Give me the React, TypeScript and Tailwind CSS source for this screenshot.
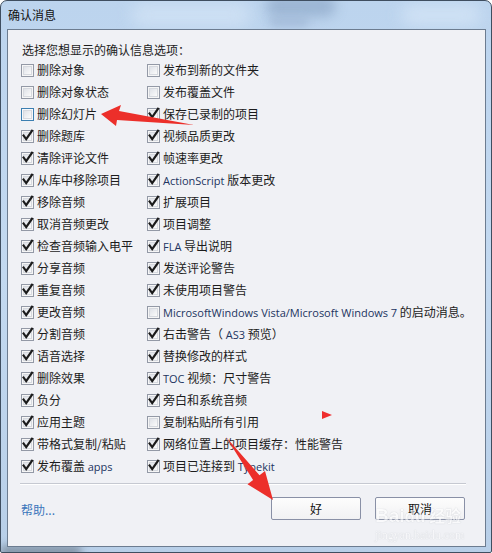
import React from "react";

const L = ({ children }: { children: React.ReactNode }) => (
  <span className="font-['Open_Sans',sans-serif] text-[11px] text-[#22345f]">{children}</span>
);

type Item = { label: React.ReactNode; checked: boolean; focus?: boolean };

const leftItems: Item[] = [
  { label: "删除对象", checked: false },
  { label: "删除对象状态", checked: false },
  { label: "删除幻灯片", checked: false, focus: true },
  { label: "删除题库", checked: true },
  { label: "清除评论文件", checked: true },
  { label: "从库中移除项目", checked: true },
  { label: "移除音频", checked: true },
  { label: "取消音频更改", checked: true },
  { label: "检查音频输入电平", checked: true },
  { label: "分享音频", checked: true },
  { label: "重复音频", checked: true },
  { label: "更改音频", checked: true },
  { label: "分割音频", checked: true },
  { label: "语音选择", checked: true },
  { label: "删除效果", checked: true },
  { label: "负分", checked: true },
  { label: "应用主题", checked: true },
  { label: "带格式复制/粘贴", checked: true },
  { label: <>发布覆盖 <L>apps</L></>, checked: true },
];

const rightItems: Item[] = [
  { label: "发布到新的文件夹", checked: false },
  { label: "发布覆盖文件", checked: false },
  { label: "保存已录制的项目", checked: true },
  { label: "视频品质更改", checked: true },
  { label: "帧速率更改", checked: true },
  { label: <><L>ActionScript</L> 版本更改</>, checked: true },
  { label: "扩展项目", checked: true },
  { label: "项目调整", checked: true },
  { label: <><L>FLA</L> 导出说明</>, checked: true },
  { label: "发送评论警告", checked: true },
  { label: "未使用项目警告", checked: true },
  { label: <><L>MicrosoftWindows Vista/Microsoft Windows 7</L> 的启动消息。</>, checked: false },
  { label: <>右击警告（ <L>AS3</L> 预览）</>, checked: true },
  { label: "替换修改的样式", checked: true },
  { label: <><L>TOC</L> 视频：尺寸警告</>, checked: true },
  { label: "旁白和系统音频", checked: true },
  { label: "复制粘贴所有引用", checked: false },
  { label: "网络位置上的项目缓存：性能警告", checked: true },
  { label: <>项目已连接到 <L>Typekit</L></>, checked: true },
];

function Box({ checked, focus }: { checked: boolean; focus?: boolean }) {
  return (
    <span
      className={
        focus
          ? "relative flex h-[13px] w-[13px] shrink-0 items-center justify-center border border-[#3c7fb1] bg-[#f6f8fb]"
          : "relative flex h-[13px] w-[13px] shrink-0 items-center justify-center border border-[#9399a6] bg-[#f6f6f6]"
      }
    >
      <span className="h-[9px] w-[9px] border border-[#d6d9df] bg-gradient-to-br from-[#dfe2e8] to-[#fbfbfb]" />
      {checked && (
        <svg
          className="absolute left-[-1px] top-[-1px] overflow-visible"
          width="13"
          height="13"
          viewBox="0 0 13 13"
        >
          <path d="M2.6 5.6 L5.2 9.2 L11 0.8" fill="none" stroke="#1b1b1b" strokeWidth="2.2" strokeLinecap="square" strokeLinejoin="miter" />
        </svg>
      )}
    </span>
  );
}

function Row({ item }: { item: Item }) {
  return (
    <div className="flex h-[22px] items-center gap-[3px] whitespace-nowrap">
      <Box checked={item.checked} focus={item.focus} />
      <span className="leading-[22px]">{item.label}</span>
    </div>
  );
}

export default function App() {
  const rows: Item[] = [];
  leftItems.forEach((it, i) => {
    rows.push(it);
    rows.push(rightItems[i]);
  });
  return (
    <div className="relative h-[553px] w-[492px] overflow-hidden font-['Noto_Sans_CJK_SC',sans-serif] text-[12px] text-[#1c1c1c]">
      <div className="relative flex h-[553px] w-[492px] flex-col overflow-hidden rounded-t-[7px] rounded-b-[2px] border border-[#3f4e60] bg-gradient-to-b from-[#bcd4ee] via-[#c3d9f0] to-[#b8cfe8]">
        {/* glass blur blobs */}
        <div className="pointer-events-none absolute left-[265px] top-[-6px] h-[22px] w-[70px] rounded-full bg-[#8fa9c9] opacity-70 blur-[6px]" />
        <div className="pointer-events-none absolute left-[268px] top-[16px] h-[10px] w-[40px] rounded-full bg-[#9db5d3] opacity-70 blur-[4px]" />
        <div className="pointer-events-none absolute left-[130px] top-[2px] h-[24px] w-[120px] rounded-full bg-[#d2e3f5] opacity-80 blur-[8px]" />
        <div className="pointer-events-none absolute left-[400px] top-[4px] h-[20px] w-[80px] rounded-full bg-[#d6e6f7] opacity-80 blur-[8px]" />
        <div className="pointer-events-none absolute bottom-[-4px] left-[0px] h-[10px] w-[80px] bg-[#56626f] opacity-60 blur-[4px]" />

        <div className="relative flex h-[28px] shrink-0 items-center pl-[7px] text-[12px] text-[#111]">
          确认消息
        </div>

        <div className="relative ml-[6px] h-[518px] w-[479px] shrink-0 border border-[#6c7c90] bg-[#f0f1f5]">
          <div className="flex flex-col pl-[13px] pt-[10px]">
            <div className="h-[19px] pl-[1px] leading-[20px]">选择您想显示的确认信息选项：</div>
            <div className="grid grid-cols-[126px_1fr]">
              {rows.map((it, i) => (
                <Row key={i} item={it} />
              ))}
            </div>
            <div className="-ml-[1px] mt-[6px] h-[2px] w-[446px] border-t border-b border-t-[#c6c9d1] border-b-[#ffffff]" />
            <div className="mt-[12px] flex w-[444px] items-center">
              <span className="pt-[2px] text-[#3a76bb]">帮助...</span>
              <div className="ml-auto flex gap-[14px]">
                <button className="flex h-[23px] w-[90px] items-center justify-center rounded-[2px] border border-[#8990a6] bg-gradient-to-b from-[#fdfdfd] to-[#f1f1f3] text-[12px] text-[#111]">
                  好
                </button>
                <button className="flex h-[23px] w-[90px] items-center justify-center rounded-[2px] border border-[#8990a6] bg-gradient-to-b from-[#fdfdfd] to-[#f1f1f3] text-[12px] text-[#111]">
                  取消
                </button>
              </div>
            </div>
          </div>
        </div>
      </div>

      {/* annotations */}
      <svg className="pointer-events-none absolute left-0 top-0" width="492" height="553" viewBox="0 0 492 553">
        <polygon points="101,114 121,105 119,111 194,125 117,120 116,126" fill="#ec2f2a" />
        <polygon points="273,500 265,471 259.5,475.2 226,437 253.1,480 247.5,484.2" fill="#ec2f2a" />
        <polygon points="322,411 322,419 332,415" fill="#ef2e2e" />
      </svg>

      {/* watermark */}
      <div className="pointer-events-none absolute left-[375px] top-[504px] flex flex-col items-start opacity-60">
        <div className="flex items-baseline font-['Liberation_Sans',sans-serif] text-[19px] font-bold leading-[22px] text-white [text-shadow:0_0_1px_#9aa0aa]">
          <span>Bai</span>
          <span className="text-[17px]">du</span>
          <span className="ml-[4px] font-['Noto_Sans_CJK_SC',sans-serif] text-[16px]">经验</span>
        </div>
        <div className="font-['Liberation_Serif',serif] text-[12px] leading-[14px] text-white [text-shadow:0_0_1px_#9aa0aa]">
          jingyan.baidu.com
        </div>
      </div>
    </div>
  );
}
